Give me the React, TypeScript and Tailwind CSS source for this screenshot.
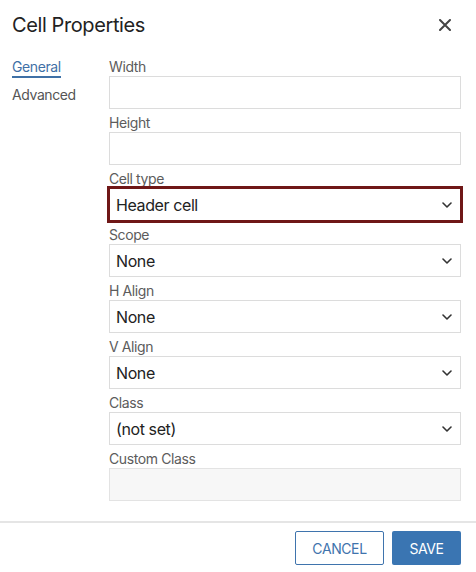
import React from 'react';

const Chevron = () => (
  <svg width="10" height="6" viewBox="0 0 10 6" fill="none" className="shrink-0">
    <path d="M1 1l4 4 4-4" stroke="#333" strokeWidth="1.6" strokeLinecap="round" strokeLinejoin="round" />
  </svg>
);

const Field = ({ label, children }: { label: string; children: React.ReactNode }) => (
  <div className="flex flex-col">
    <label className="h-[20px] text-[14px] leading-[21px] text-[#5c5c5c]">{label}</label>
    {children}
  </div>
);

const Select = ({ value, focused }: { value: string; focused?: boolean }) => (
  <div
    className={`h-[33px] flex items-center justify-between pl-[6px] pr-[8px] bg-white border text-[16px] text-[#222] ${
      focused ? 'border-[#6f1717] ring-2 ring-[#6f1717]' : 'border-[#dcdcdc]'
    }`}
  >
    <span>{value}</span>
    <Chevron />
  </div>
);

export default function App() {
  return (
    <div
      className="w-[476px] h-[572px] bg-white flex flex-col tracking-[-0.025em]"
      style={{ fontFamily: 'Inter, "Liberation Sans", sans-serif' }}
    >
      {/* Header */}
      <div className="h-[48px] flex items-center justify-between pl-[12px] pr-[25px] pt-[2px]">
        <h1 className="text-[20px] text-[#222]">Cell Properties</h1>
        <svg width="12" height="12" viewBox="0 0 12 12">
          <path d="M1 1l10 10M11 1L1 11" stroke="#444" strokeWidth="2" strokeLinecap="round" />
        </svg>
      </div>

      {/* Body */}
      <div className="flex-1 flex pt-[8px] pr-[15px]">
        <nav className="w-[109px] pl-[12px] flex flex-col text-[14px]">
          <div className="h-[20px] leading-[21px]">
            <span className="text-[#3f70a6] border-b-2 border-[#3f70a6] pb-[1px]">General</span>
          </div>
          <div className="h-[20px] leading-[21px] mt-[8px] text-[#555]">Advanced</div>
        </nav>
        <div className="flex-1 flex flex-col gap-[3px]">
          <Field label="Width">
            <div className="h-[33px] border border-[#dcdcdc] bg-white" />
          </Field>
          <Field label="Height">
            <div className="h-[33px] border border-[#dcdcdc] bg-white" />
          </Field>
          <Field label="Cell type">
            <Select value="Header cell" focused />
          </Field>
          <Field label="Scope">
            <Select value="None" />
          </Field>
          <Field label="H Align">
            <Select value="None" />
          </Field>
          <Field label="V Align">
            <Select value="None" />
          </Field>
          <Field label="Class">
            <Select value="(not set)" />
          </Field>
          <Field label="Custom Class">
            <div className="h-[33px] border border-[#e3e3e3] bg-[#f7f7f7]" />
          </Field>
        </div>
      </div>

      {/* Footer */}
      <div className="h-[51px] border-t-2 border-[#e5e5e5] flex justify-end items-start gap-[8px] pt-[8px] pr-[15px]">
        <button className="h-[34px] w-[89px] border border-[#3f74ad] rounded-[2px] text-[#3f74ad] text-[14px] bg-white">
          CANCEL
        </button>
        <button className="h-[34px] w-[69px] rounded-[2px] bg-[#3a75b2] text-white text-[14px]">SAVE</button>
      </div>
    </div>
  );
}
